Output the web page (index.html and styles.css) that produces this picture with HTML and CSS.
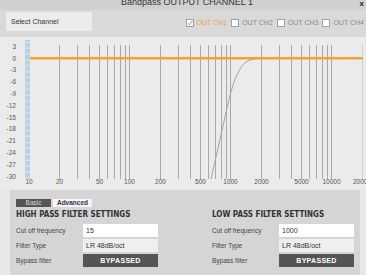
FILE: index.html
```html
<!DOCTYPE html>
<html lang="en">
<head>
    <meta charset="UTF-8">
    <meta name="viewport" content="width=device-width, initial-scale=1.0">
    <title>Bandpass OUTPUT CHANNEL 1</title>
    <link rel="stylesheet" href="styles.css">
</head>
<body>

    <div class="dialog">
        <div class="titlebar">
            <span></span>
            <span class="title">Bandpass OUTPUT CHANNEL 1</span>
            <span class="close">x</span>
        </div>

        <div class="toolbar">
            <div class="select-box">Select Channel</div>
            <div class="channels">
                <span class="channel active">
                    <span class="check"><svg width="6" height="6" viewBox="0 0 6 6"><path d="M0.8 3.2l1.6 1.5L5.4 0.8" fill="none" stroke="#8a8a8a" stroke-width="0.9"/></svg></span>
                    OUT CH1
                </span>
                <span class="channel"><span class="check"></span>OUT CH2</span>
                <span class="channel"><span class="check"></span>OUT CH3</span>
                <span class="channel"><span class="check"></span>OUT CH4</span>
            </div>
        </div>

        <div class="chart">
            <svg class="graph" width="366" height="152" viewBox="0 0 366 152">
                <defs>
                    <pattern id="ruler-ticks" width="5" height="5.9" patternUnits="userSpaceOnUse">
                        <rect width="5" height="5.9" fill="#bad1e3"/>
                        <rect y="4.6" width="5" height="1.1" fill="#dbe8f1"/>
                    </pattern>
                </defs>
                <rect x="25" y="3" width="5" height="139" fill="url(#ruler-ticks)"/>

                <!-- log grid: 20..90, 100..900, 1k..10k -->
                <path class="grid" d="M59.5 8V142M77.5 8V142M89.5 8V142M99.5 8V142M107.5 8V142M114.5 8V142M120.5 8V142M125.5 8V142
                    M129.5 8V142M160.5 8V142M178.5 8V142M190.5 8V142M200.5 8V142M208.5 8V142M215.5 8V142M221.5 8V142M226.5 8V142
                    M230.5 8V142M261.5 8V142M279.5 8V142M291.5 8V142M301.5 8V142M309.5 8V142M316.5 8V142M322.5 8V142M327.5 8V142
                    M331.5 8V142"/>
                <path class="grid-end" d="M362.5 8V142"/>

                <path class="response" d="M211 142L225 80C229 61 233 44 240 32C244 25.5 248 22.5 257 21.6"/>
                <line class="level" x1="30" y1="21.3" x2="363" y2="21.3"/>

                <g class="axis y-axis">
                    <text x="16" y="11.8">3</text>
                    <text x="16" y="23.6">0</text>
                    <text x="16" y="35.4">-3</text>
                    <text x="16" y="47.2">-6</text>
                    <text x="16" y="59">-9</text>
                    <text x="16" y="70.8">-12</text>
                    <text x="16" y="82.6">-15</text>
                    <text x="16" y="94.4">-18</text>
                    <text x="16" y="106.2">-21</text>
                    <text x="16" y="118">-24</text>
                    <text x="16" y="129.8">-27</text>
                    <text x="16" y="141.6">-30</text>
                </g>
                <g class="axis x-axis">
                    <text x="29" y="147">10</text>
                    <text x="59.5" y="147">20</text>
                    <text x="99.5" y="147">50</text>
                    <text x="129.5" y="147">100</text>
                    <text x="160.5" y="147">200</text>
                    <text x="200.5" y="147">500</text>
                    <text x="230.5" y="147">1000</text>
                    <text x="261.5" y="147">2000</text>
                    <text x="301.5" y="147">5000</text>
                    <text x="331.5" y="147">10000</text>
                    <text x="362" y="147">20000</text>
                </g>
            </svg>
        </div>

        <div class="settings">
            <div class="panel">
                <div class="tabs">
                    <span class="tab">Basic</span>
                    <span class="tab selected">Advanced</span>
                </div>

                <div class="columns">
                    <div class="filter">
                        <h3>HIGH PASS FILTER SETTINGS</h3>
                        <div class="row">
                            <span class="label">Cut off frequency</span>
                            <input class="field" type="text" value="15">
                        </div>
                        <div class="row">
                            <span class="label">Filter Type</span>
                            <span class="field readonly">LR 48dB/oct</span>
                        </div>
                        <div class="row">
                            <span class="label">Bypass filter</span>
                            <span class="field bypass">BYPASSED</span>
                        </div>
                    </div>

                    <div class="filter">
                        <h3>LOW PASS FILTER SETTINGS</h3>
                        <div class="row">
                            <span class="label">Cut off frequency</span>
                            <input class="field" type="text" value="1000">
                        </div>
                        <div class="row">
                            <span class="label">Filter Type</span>
                            <span class="field readonly">LR 48dB/oct</span>
                        </div>
                        <div class="row">
                            <span class="label">Bypass filter</span>
                            <span class="field bypass">BYPASSED</span>
                        </div>
                    </div>
                </div>
            </div>
        </div>
    </div>

</body>
</html>
```

FILE: styles.css
```css
body {
    margin: 0;
    padding: 0;
    font-family: "Liberation Sans", Arial, sans-serif;
    background-color: #e8e8e8;
}

.dialog {
    width: 366px;
    height: 275px;
    overflow: hidden;
    display: flex;
    flex-direction: column;
    background-color: #e8e8e8;
}

/* window title */
.titlebar {
    flex: none;
    height: 10px;
    overflow: hidden;
    display: grid;
    grid-template-columns: 1fr auto 1fr;
    padding-left: 8px;
    background-color: #d0d0d0;
}

.title {
    margin-top: -2px;
    font-size: 9px;
    line-height: 9px;
    color: #333;
    white-space: nowrap;
}

.close {
    justify-self: end;
    padding-right: 2px;
    font-size: 8px;
    font-weight: bold;
    line-height: 8px;
    color: #222;
}

/* channel selector row */
.toolbar {
    flex: none;
    height: 27px;
    display: flex;
    align-items: flex-start;
    background-color: #d9d9d9;
}

.select-box {
    margin: 2px 0 0 6px;
    width: 81px;
    height: 19px;
    padding-left: 5px;
    background-color: #ececec;
    font-size: 7px;
    line-height: 19px;
    color: #333;
}

.channels {
    margin: 9px 2px 0 auto;
    display: flex;
    gap: 4px;
}

.channel {
    display: flex;
    align-items: center;
    gap: 3px;
    font-size: 7px;
    line-height: 8px;
    color: #8a8a8a;
    white-space: nowrap;
}

.channel.active {
    color: #f0a036;
}

.check {
    width: 6px;
    height: 6px;
    border: 1px solid #a0a0a0;
    background-color: #fff;
}

.check svg {
    display: block;
}

/* response graph */
.chart {
    flex: none;
    height: 152px;
    background-color: #ebebeb;
}

.graph {
    display: block;
}

.grid {
    fill: none;
    stroke: #aaaaaa;
    stroke-width: 1;
}

.grid-end {
    fill: none;
    stroke: #d2d2d2;
    stroke-width: 1;
}

.response {
    fill: none;
    stroke: #a2a2a2;
    stroke-width: 1;
}

.level {
    stroke: #f2a23a;
    stroke-width: 2.5;
}

.axis text {
    font-family: "Liberation Sans", Arial, sans-serif;
    font-size: 6.5px;
    fill: #555;
}

.y-axis text {
    text-anchor: end;
}

.x-axis text {
    text-anchor: middle;
}

/* filter settings */
.settings {
    flex: 1;
    padding: 1px 6px 0 10px;
}

.panel {
    height: 100%;
    box-sizing: border-box;
    padding: 9px 6px 0;
    background-color: #d5d5d5;
}

.tabs {
    display: flex;
    gap: 2px;
    height: 8px;
}

.tab {
    width: 35px;
    font-size: 6.5px;
    line-height: 8px;
    text-align: center;
    background-color: #555;
    color: #ddd;
}

.tab.selected {
    width: 39px;
    background-color: #f4f4f4;
    color: #3b2b5b;
    font-weight: bold;
}

.columns {
    display: grid;
    grid-template-columns: 196px 1fr;
}

.filter h3 {
    margin: 3px 0 4px;
    font-family: "DejaVu Sans", Verdana, sans-serif;
    font-stretch: condensed;
    font-size: 8px;
    line-height: 10px;
    font-weight: bold;
    color: #333;
    white-space: nowrap;
}

.row {
    display: flex;
    align-items: center;
    height: 13px;
    margin-bottom: 2px;
}

.label {
    width: 67px;
    font-size: 6.5px;
    color: #444;
}

.field {
    width: 75px;
    height: 13px;
    box-sizing: border-box;
    border: 0;
    padding: 0 0 0 3px;
    font-family: "Liberation Sans", Arial, sans-serif;
    font-size: 7px;
    line-height: 13px;
    color: #333;
    background-color: #fff;
}

.field.readonly {
    background-color: #efefef;
}

.field.bypass {
    padding: 0;
    text-align: center;
    font-weight: bold;
    letter-spacing: 0.3px;
    color: #fff;
    background-color: #555;
}
```
